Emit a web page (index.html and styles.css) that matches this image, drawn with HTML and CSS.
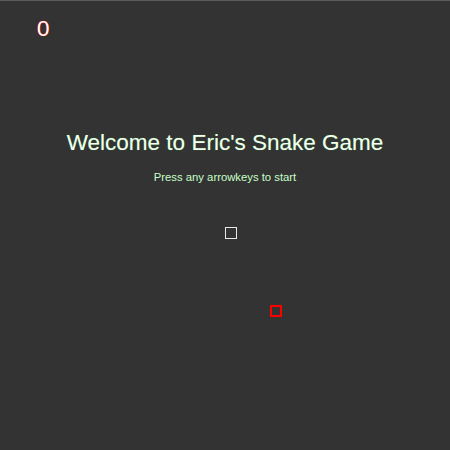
FILE: index.html
```html
<!DOCTYPE html>
<html>
<head>
<meta charset="utf-8">
<link rel="stylesheet" href="styles.css">
</head>
<body>
<div class="game">
  <div class="score">0</div>
  <div class="intro">
    <h1 class="title">Welcome to Eric's Snake Game</h1>
    <p class="hint">Press any arrowkeys to start</p>
  </div>
  <div class="cell snake" style="left:225px;top:226px"></div>
  <div class="cell food" style="left:270px;top:304px"></div>
</div>
</body>
</html>
```
FILE: styles.css
```css
html, body {
  margin: 0;
  padding: 0;
  background: #333333;
}
.game {
  position: relative;
  width: 450px;
  height: 450px;
  border-top: 1px solid #5a5a5a;
  box-sizing: border-box;
  font-family: "Liberation Sans", Arial, sans-serif;
  overflow: hidden;
}
.score {
  padding: 15px 0 0 37px;
  font-size: 22.5px;
  line-height: 26px;
  color: #ffffff;
  text-shadow: 0 0 1px #ff0000, 0 0 1px #ff0000;
}
.intro {
  text-align: center;
  padding-top: 88px;
}
.title {
  margin: 0;
  font-size: 22.5px;
  font-weight: normal;
  line-height: 26px;
  color: #f2fff2;
  text-shadow: 0 0 1px #3c9a3c;
}
.hint {
  margin: 15px 0 0;
  font-size: 11.3px;
  line-height: 13px;
  color: #c8ffc8;
}
.cell {
  position: absolute;
  width: 12px;
  height: 12px;
  box-sizing: border-box;
}
.snake {
  border: 1px solid #e8e8e8;
}
.food {
  border: 2px solid #ff0000;
}
```
